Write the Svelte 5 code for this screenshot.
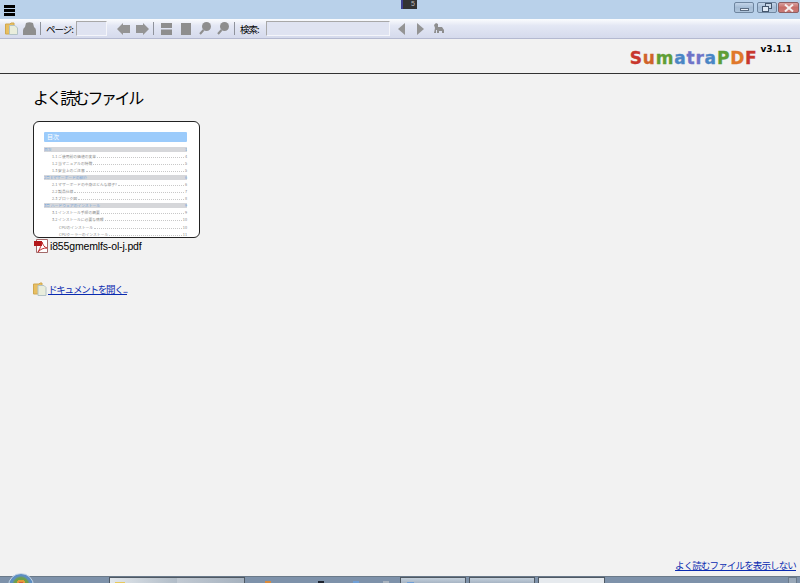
<script lang="ts">
  type TocRow = { label: string; page: number; kind: "chapter" | "section" | "sub" };

  const tocRows: TocRow[] = [
    { label: "目次", page: 1, kind: "chapter" },
    { label: "1.1 ご使用前の価値の変革", page: 4, kind: "section" },
    { label: "1.2 当マニュアルの特徴", page: 5, kind: "section" },
    { label: "1.3 安全上のご注意", page: 5, kind: "section" },
    { label: "2章 Eマザーボードの紹介", page: 6, kind: "chapter" },
    { label: "2.1 マザーボードの中身はどんな様子?", page: 6, kind: "section" },
    { label: "2.2 製品仕様", page: 7, kind: "section" },
    { label: "2.3 ブロック図", page: 8, kind: "section" },
    { label: "3章 ハードウェアのインストール", page: 9, kind: "chapter" },
    { label: "3.1 インストール手順の概要", page: 9, kind: "section" },
    { label: "3.2 インストールに必要な情報", page: 10, kind: "section" },
    { label: "CPUのインストール", page: 10, kind: "sub" },
    { label: "CPUクーラーのインストール", page: 11, kind: "sub" }
  ];

  const logoLetters = [
    ["S", "#c8372d"],
    ["u", "#d0632a"],
    ["m", "#5f9e36"],
    ["a", "#4a86c5"],
    ["t", "#6f74c8"],
    ["r", "#6f74c8"],
    ["a", "#4a86c5"],
    ["P", "#5f9e36"],
    ["D", "#e0782a"],
    ["F", "#c8372d"]
  ];

  // tops of the tray icons, cut off by the bottom of the screen
  const peeks = [
    { left: 17, color: "#d98a3c" },
    { left: 70, color: "#1d2430" },
    { left: 105, color: "#6f9fd6" },
    { left: 135, color: "#aab4bf" }
  ];
</script>

<div class="window">
  <header class="titlebar">
    <div class="hamburger" aria-label="menu"><span></span><span></span><span></span></div>
    <div class="title-thumb"><span class="thumb-edge"></span><span class="thumb-num">5</span></div>
    <div class="caption-buttons">
      <button class="cap cap-min" aria-label="minimize"><span class="min-bar"></span></button>
      <button class="cap cap-max" aria-label="restore">
        <svg viewBox="0 0 10 9" width="10" height="9">
          <rect x="3.5" y="0.5" width="6" height="5" fill="#c9d8e8" stroke="#44566d" />
          <rect x="0.5" y="3.5" width="6" height="5" fill="#dfe9f5" stroke="#44566d" />
        </svg>
      </button>
      <button class="cap cap-close" aria-label="close">
        <svg viewBox="0 0 10 8" width="10" height="8">
          <path d="M1 0.5 L9 7.5 M9 0.5 L1 7.5" stroke="#f4eeee" stroke-width="2" />
        </svg>
      </button>
    </div>
  </header>

  <nav class="toolbar">
    <svg class="tool-open" viewBox="0 0 13 13" width="13" height="13">
      <path d="M0.5 2 H5 L6 1 H9 V12 H0.5 Z" fill="#e8bf62" stroke="#d0a850" />
      <path d="M4.5 3.5 H10 L12.5 6 V12.5 H4.5 Z" fill="#e9eddc" stroke="#b2c3c6" />
    </svg>
    <svg class="tool-print" viewBox="0 0 13 13" width="13" height="13">
      <path d="M3 1 Q6.5 -0.5 10 1 L11 5 Q13 6 13 8.5 V13 H0 V8.5 Q0 6 2 5 Z" fill="#8e8e8e" />
    </svg>
    <span class="sep"></span>
    <span class="tool-label page-label">ページ:</span>
    <span class="tool-input page-input"></span>
    <svg class="arrow-prev" viewBox="0 0 13 12" width="13" height="12">
      <path d="M0 6 L6 0 V2 H13 V10 H6 V12 Z" fill="#949494" />
    </svg>
    <svg class="arrow-next" viewBox="0 0 13 12" width="13" height="12">
      <path d="M13 6 L7 0 V2 H0 V10 H7 V12 Z" fill="#949494" />
    </svg>
    <span class="sep sep-nav"></span>
    <svg class="view-facing" viewBox="0 0 11 12" width="11" height="12">
      <path d="M0 0 H11 V5 H0 Z M0 6.5 H11 V12 H0 Z" fill="#8e8e8e" />
    </svg>
    <span class="view-single"></span>
    <svg class="zoom-one" viewBox="0 0 12 13" width="12" height="13">
      <circle cx="7.5" cy="4.5" r="4.5" fill="#8e8e8e" />
      <path d="M4.5 8 L1 12" stroke="#8e8e8e" stroke-width="2" />
    </svg>
    <svg class="zoom-two" viewBox="0 0 12 13" width="12" height="13">
      <circle cx="7.5" cy="4.5" r="4.5" fill="#8e8e8e" />
      <path d="M4.5 8 L1 12" stroke="#8e8e8e" stroke-width="2" />
    </svg>
    <span class="sep sep-search"></span>
    <span class="tool-label search-label">検索:</span>
    <span class="tool-input search-input"></span>
    <svg class="find-prev" viewBox="0 0 7 12" width="7" height="12"><path d="M7 0 V12 L0 6 Z" fill="#949494" /></svg>
    <svg class="find-next" viewBox="0 0 7 12" width="7" height="12"><path d="M0 0 V12 L7 6 Z" fill="#949494" /></svg>
    <svg class="find-case" viewBox="0 0 12 11" width="12" height="11">
      <path d="M1 10 L2 5 L1 2 L3 0 L5 1 L5 4 L9 4 L11 7 V10 H9 V8 H6 V10 H4 V7 H3 L3 10 Z" fill="#8e8e8e" />
    </svg>
  </nav>

  <section class="brand-row">
    <div class="brand">
      <span class="logo">
        {#each logoLetters as [ch, color]}
          <span style="color: {color}">{ch}</span>
        {/each}
      </span>
      <span class="version">v3.1.1</span>
    </div>
  </section>

  <main class="content">
    <h1>よく読むファイル</h1>

    <div class="thumb-card">
      <div class="toc-title">目次</div>
      {#each tocRows as row}
        <div class="toc-row {row.kind}">
          <span class="toc-fill">
            <span>{row.label}</span><span class="leader"></span><span>{row.page}</span>
          </span>
        </div>
      {/each}
    </div>

    <div class="file-row">
      <svg viewBox="0 0 14 14" width="14" height="14">
        <path d="M2.5 0.5 H13.5 V13.5 H2.5 Z" fill="#fff" stroke="#a36a6a" />
        <rect x="0" y="2" width="8" height="5" fill="#b3191c" />
        <path d="M4 13 C7 8 7 6 8 3 C9 6 10 8 13 9 C9 9 7 10 4 13 Z" fill="none" stroke="#c0292c" />
      </svg>
      <span class="file-name">i855gmemlfs-ol-j.pdf</span>
    </div>

    <div class="open-row">
      <svg viewBox="0 0 14 14" width="14" height="14">
        <path d="M0.5 2 H6 L7 1 H9 V12 H0.5 Z" fill="#e8bf62" stroke="#d0a850" />
        <path d="M5 3.5 H11 L13 5.5 V13.5 H5 Z" fill="#e9eddc" stroke="#b2c3c6" />
      </svg>
      <a href="#open" class="doc-link open-link">ドキュメントを開く...</a>
    </div>
  </main>

  <div class="footer-row">
    <a href="#hide" class="doc-link">よく読むファイルを表示しない</a>
  </div>

  <footer class="taskbar">
    <span class="orb"></span>
    <div class="task-list">
      <span class="task task-first"><span class="first-icon"></span></span>
      <span class="tray-gap">
        {#each peeks as p}
          <span class="peek" style="left: {p.left}px; background: {p.color}"></span>
        {/each}
      </span>
      <span class="task task-mid"><span class="mid-icon"></span></span>
      <span class="task task-mid"></span>
      <span class="task task-active"></span>
    </div>
    <span class="show-desktop"></span>
  </footer>
</div>

<style>
  :global(body) {
    margin: 0;
    background: #f2f2f2;
  }

  .window {
    width: 800px;
    height: 583px;
    display: flex;
    flex-direction: column;
    overflow: hidden;
    position: relative;
    font-family: "Noto Sans CJK JP", "Liberation Sans", sans-serif;
    color: #000;
    background: #f2f2f2;
  }

  .titlebar {
    height: 19px;
    flex: none;
    background: #b9d1ea;
    display: flex;
    justify-content: space-between;
    position: relative;
  }

  .hamburger {
    margin: 5px 0 0 4px;
    width: 11px;
    display: flex;
    flex-direction: column;
    gap: 1.6px;
  }

  .hamburger span {
    height: 2.6px;
    background: #000;
  }

  .title-thumb {
    position: absolute;
    left: 401px;
    top: 0;
    width: 16px;
    height: 9px;
    background: #333;
    display: flex;
    color: #bbb;
    font: 7px/8px "Liberation Sans", sans-serif;
  }

  .thumb-edge {
    width: 2px;
    background: #3d3f8f;
  }

  .thumb-num {
    margin-left: 8px;
  }

  .caption-buttons {
    display: flex;
    margin: 2px 1px 0 0;
    height: 11px;
  }

  .cap {
    padding: 0;
    border: 1px solid #6f86a0;
    border-radius: 2px;
    height: 11px;
    width: 20px;
    display: flex;
    align-items: center;
    justify-content: center;
    box-sizing: border-box;
    background: linear-gradient(#c3d5e9, #a5bcd5 50%, #afc5dc);
  }

  .cap-max {
    margin-left: 3px;
  }

  .cap-close {
    width: 21px;
    margin-left: 1px;
    border-color: #8c5f63;
    background: linear-gradient(#d9a09f, #c66d68 50%, #cb7a76);
  }

  .cap-max svg,
  .cap-close svg {
    display: block;
  }

  .min-bar {
    width: 9px;
    height: 3px;
    margin-top: 3px;
    background: #e8eef6;
    border: 1px solid #5a6c82;
    box-sizing: border-box;
  }

  .toolbar {
    height: 20px;
    flex: none;
    box-sizing: border-box;
    display: flex;
    align-items: center;
    background: linear-gradient(#fbfcfe, #e3e7f4 35%, #d5daec);
    border-bottom: 1px solid #b4b9d0;
  }

  .toolbar svg {
    display: block;
    flex: none;
  }

  .tool-open {
    margin-left: 5px;
  }

  .tool-print {
    margin-left: 5px;
  }

  .sep {
    width: 1px;
    height: 13px;
    background: #8f939c;
    margin-left: 4px;
    flex: none;
  }

  .tool-label {
    font-size: 9.5px;
    line-height: 14px;
    white-space: nowrap;
    letter-spacing: -1px;
    flex: none;
  }

  .page-label {
    margin-left: 5px;
    width: 27px;
  }

  .tool-input {
    height: 15px;
    box-sizing: border-box;
    border: 1px solid #f4f5fa;
    border-color: #a8a8a8 #f4f5fa #f4f5fa #a8a8a8;
    background: #dfe3f1;
    flex: none;
  }

  .page-input {
    width: 31px;
    margin-left: 3px;
  }

  .arrow-prev {
    margin-left: 10px;
  }

  .arrow-next {
    margin-left: 6px;
  }

  .sep-nav {
    margin-left: 4px;
  }

  .view-facing {
    margin-left: 7px;
  }

  .view-single {
    width: 10px;
    height: 12px;
    background: #8e8e8e;
    margin-left: 9px;
    flex: none;
  }

  .zoom-one {
    margin-left: 8px;
  }

  .zoom-two {
    margin-left: 6px;
  }

  .sep-search {
    margin-left: 5px;
  }

  .search-label {
    margin-left: 5px;
    width: 22px;
  }

  .search-input {
    width: 124px;
    margin-left: 4px;
  }

  .find-prev {
    margin-left: 8px;
  }

  .find-next {
    margin-left: 12px;
  }

  .find-case {
    margin-left: 9px;
  }

  .brand-row {
    height: 35px;
    flex: none;
    box-sizing: border-box;
    border-bottom: 1px solid #333;
    display: flex;
    justify-content: flex-end;
  }

  .brand {
    display: flex;
    align-items: flex-start;
    margin-right: 8px;
  }

  .logo {
    font: 700 17px/20px "DejaVu Sans", sans-serif;
    margin-top: 9px;
    letter-spacing: 0.8px;
    -webkit-text-stroke: 0.3px currentColor;
  }

  .version {
    font: 700 9px/10px "DejaVu Sans", sans-serif;
    margin: 5px 0 0 3px;
  }

  .content {
    flex: 1;
    padding: 0 0 0 33px;
  }

  h1 {
    margin: 11px 0 11px;
    font-size: 16px;
    line-height: 25px;
    font-weight: 400;
    letter-spacing: -2.4px;
  }

  .thumb-card {
    width: 167px;
    height: 117px;
    box-sizing: border-box;
    border: 1.5px solid #222;
    border-radius: 6px;
    background: #fff;
    padding: 10px 12px 0 10px;
    overflow: hidden;
  }

  .toc-title {
    height: 10px;
    background: #9bcbfb;
    border-radius: 1px;
    color: #fff;
    font-size: 6px;
    line-height: 10px;
    padding-left: 3px;
    margin-bottom: 3.5px;
  }

  .toc-row {
    font-size: 3.8px;
    height: 7.1px;
    color: #888;
    display: flex;
    align-items: center;
  }

  .toc-fill {
    flex: 1;
    display: flex;
    align-items: center;
    height: 5px;
    line-height: 5px;
    white-space: nowrap;
  }

  .toc-row.chapter .toc-fill {
    background: #d6d7da;
    color: #6fa3dc;
  }

  .toc-row.chapter .leader {
    border: 0;
  }

  .toc-row.section {
    padding-left: 8px;
  }

  .toc-row.sub {
    padding-left: 15px;
  }

  .leader {
    flex: 1;
    align-self: flex-end;
    border-bottom: 1px dotted #c8c8c8;
    margin: 0 1px 1px;
  }

  .file-row {
    display: flex;
    align-items: center;
    gap: 2px;
    margin: 1px 0 0 1px;
    height: 14px;
    font-size: 10.5px;
  }

  .file-name {
    font-family: "Liberation Sans", sans-serif;
    letter-spacing: -0.15px;
  }

  .open-row {
    display: flex;
    align-items: center;
    gap: 1px;
    margin-top: 29px;
    height: 14px;
  }

  .doc-link {
    color: #0a2bb0;
    font-size: 9.5px;
    letter-spacing: -0.86px;
    text-decoration: underline;
  }

  .open-link {
    letter-spacing: -1.2px;
  }

  .footer-row {
    flex: none;
    height: 18px;
    display: flex;
    justify-content: flex-end;
    padding-right: 4px;
  }

  .taskbar {
    flex: none;
    height: 7px;
    display: flex;
    position: relative;
    background: #7e92aa;
    border-top: 1px solid #6b7a8a;
    box-sizing: border-box;
  }

  .orb {
    position: absolute;
    left: 8px;
    top: -4px;
    width: 26px;
    height: 26px;
    border-radius: 50%;
    background: radial-gradient(circle at 50% 45%, #d8583a 0 3px, #e09a3a 3px 5px, #6fa04a 5px 7px, #5d8ec2 9px);
    border: 1px solid #c7d6e6;
    box-sizing: border-box;
  }

  .task-list {
    display: flex;
    margin-left: 109px;
    gap: 3px;
  }

  .task {
    height: 6px;
    width: 66px;
    box-sizing: border-box;
    border: 1px solid #4f5964;
    border-bottom: 0;
    position: relative;
  }

  .task-first {
    width: 136px;
    background: linear-gradient(90deg, #e2e7ec, #b1bcc7 50%, #c2cad3 50%, #a6b2bf);
  }

  .first-icon,
  .mid-icon {
    position: absolute;
    left: 5px;
    top: 4px;
    width: 10px;
    height: 2px;
    background: #e8c95c;
  }

  .mid-icon {
    left: 6px;
    width: 7px;
    background: #6f9fd6;
  }

  .tray-gap {
    width: 149px;
    position: relative;
  }

  .peek {
    position: absolute;
    top: 4px;
    width: 6px;
    height: 2px;
  }

  .task-mid {
    background: linear-gradient(#c4d0dc, #a7b5c4);
  }

  .task-active {
    width: 67px;
    background: #e6eaee;
  }

  .show-desktop {
    margin-left: auto;
    margin-right: 3px;
    width: 9px;
    height: 6px;
    box-sizing: border-box;
    background: #9aa9b9;
    border: 1px solid #6b7a8a;
    border-bottom: 0;
  }
</style>
